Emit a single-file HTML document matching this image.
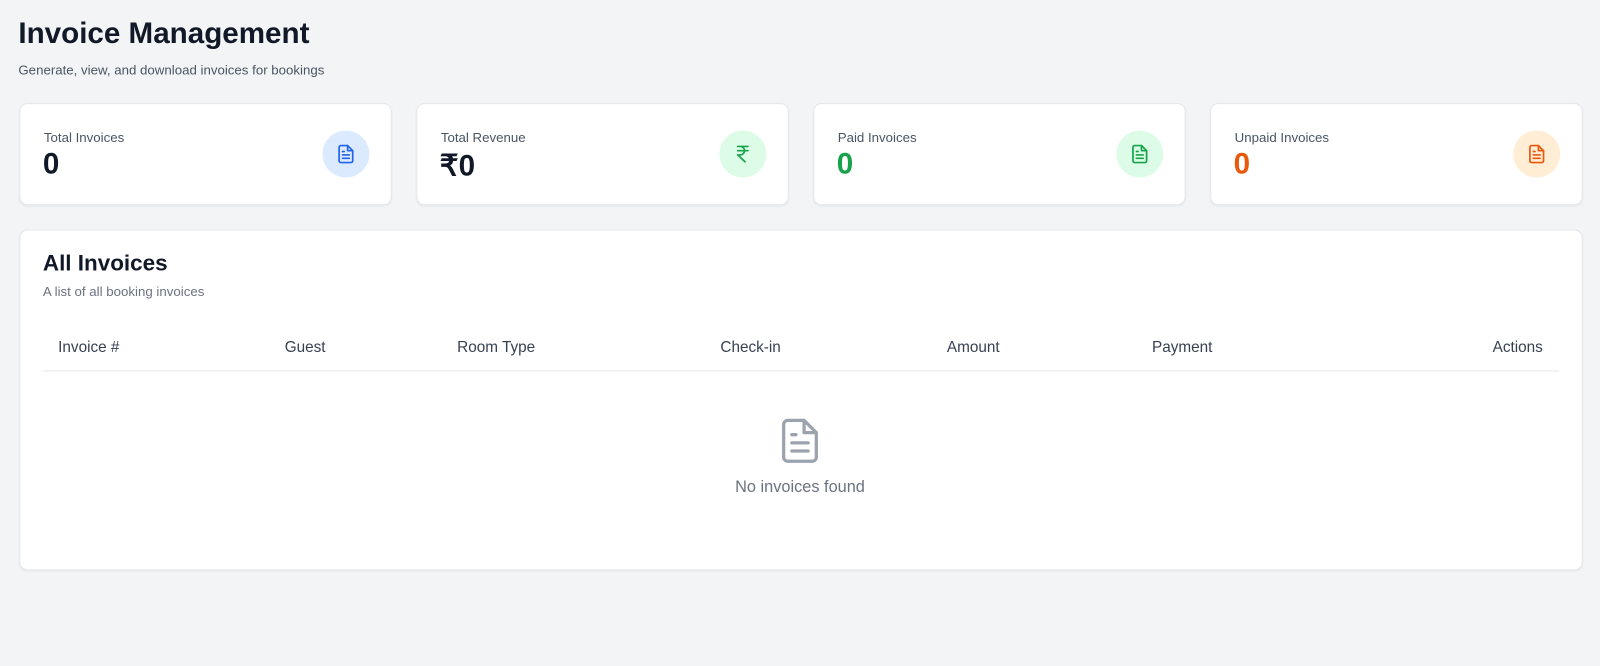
<!DOCTYPE html>
<html><head><meta charset="utf-8"><style>
*{box-sizing:border-box;margin:0;padding:0}
html,body{width:1600px;height:666px;overflow:hidden}
body{background:#f3f4f6;font-family:"Liberation Sans",Arial,sans-serif;color:#111827}
#w{position:absolute;left:0;top:0;width:1568px;height:653px;transform:scale(1.0204);transform-origin:0 0}
.a{position:absolute;white-space:nowrap}
.card{position:absolute;top:101px;width:365px;height:100px;background:#fff;border:1px solid #e5e7eb;border-radius:8px;box-shadow:0 1px 2px rgba(0,0,0,.05)}
.card .l{position:absolute;left:23px;top:25px;font-size:13px;color:#4b5563}
.card .v{position:absolute;left:22px;top:43px;font-size:29px;font-weight:bold}
.card .c{position:absolute;left:296px;top:26px;width:46px;height:46px;border-radius:50%;display:flex;align-items:center;justify-content:center}
.panel{position:absolute;left:19px;top:225px;width:1532px;height:334px;background:#fff;border:1px solid #e5e7eb;border-radius:8px;box-shadow:0 1px 2px rgba(0,0,0,.05)}
.th{position:absolute;top:332px;font-size:15px;color:#374151}
</style></head><body><div id="w">
<div class="a" style="left:18px;top:17px;font-size:29px;font-weight:bold;color:#111827">Invoice Management</div>
<div class="a" style="left:18px;top:61px;font-size:13px;color:#4b5563">Generate, view, and download invoices for bookings</div>

<div class="card" style="left:19px"><div class="l">Total Invoices</div><div class="v">0</div>
<div class="c" style="background:#dbeafe"><svg width="20" height="20" viewBox="0 0 24 24" fill="none" stroke="#2563eb" stroke-width="2" stroke-linecap="round" stroke-linejoin="round"><path d="M14 2H6a2 2 0 0 0-2 2v16a2 2 0 0 0 2 2h12a2 2 0 0 0 2-2V8z"/><path d="M14 2v6h6M16 13H8M16 17H8M10 9H8"/></svg></div></div>
<div class="card" style="left:408px"><div class="l">Total Revenue</div><div class="v">₹0</div>
<div class="c" style="background:#dcfce7"><svg width="20" height="20" viewBox="0 0 24 24" fill="none" stroke="#16a34a" stroke-width="2" stroke-linecap="round" stroke-linejoin="round"><path d="M6 3h12M6 8h12M6 13l8.5 8M6 13h3a5 5 0 0 0 0-10"/></svg></div></div>
<div class="card" style="left:797px"><div class="l">Paid Invoices</div><div class="v" style="color:#16a34a">0</div>
<div class="c" style="background:#dcfce7"><svg width="20" height="20" viewBox="0 0 24 24" fill="none" stroke="#16a34a" stroke-width="2" stroke-linecap="round" stroke-linejoin="round"><path d="M14 2H6a2 2 0 0 0-2 2v16a2 2 0 0 0 2 2h12a2 2 0 0 0 2-2V8z"/><path d="M14 2v6h6M16 13H8M16 17H8M10 9H8"/></svg></div></div>
<div class="card" style="left:1186px"><div class="l">Unpaid Invoices</div><div class="v" style="color:#ea580c">0</div>
<div class="c" style="background:#ffedd5"><svg width="20" height="20" viewBox="0 0 24 24" fill="none" stroke="#ea580c" stroke-width="2" stroke-linecap="round" stroke-linejoin="round"><path d="M14 2H6a2 2 0 0 0-2 2v16a2 2 0 0 0 2 2h12a2 2 0 0 0 2-2V8z"/><path d="M14 2v6h6M16 13H8M16 17H8M10 9H8"/></svg></div></div>

<div class="panel"></div>
<div class="a" style="left:42px;top:245px;font-size:22px;font-weight:bold">All Invoices</div>
<div class="a" style="left:42px;top:278px;font-size:13px;color:#6b7280">A list of all booking invoices</div>
<div class="th a" style="left:57px">Invoice #</div>
<div class="th a" style="left:279px">Guest</div>
<div class="th a" style="left:448px">Room Type</div>
<div class="th a" style="left:706px">Check-in</div>
<div class="th a" style="left:928px">Amount</div>
<div class="th a" style="left:1129px">Payment</div>
<div class="th a" style="right:56px">Actions</div>
<div class="a" style="left:42px;top:363px;width:1486px;height:1px;background:#e5e7eb"></div>
<svg class="a" style="left:760px;top:408px" width="48" height="48" viewBox="0 0 24 24" fill="none" stroke="#9ca3af" stroke-width="1.6" stroke-linecap="round" stroke-linejoin="round"><path d="M14 2H6a2 2 0 0 0-2 2v16a2 2 0 0 0 2 2h12a2 2 0 0 0 2-2V8z"/><path d="M14 2v6h6M16 13H8M16 17H8M10 9H8"/></svg>
<div class="a" style="left:0;width:1568px;text-align:center;top:469px;font-size:16px;color:#6b7280">No invoices found</div>
</div></body></html>
